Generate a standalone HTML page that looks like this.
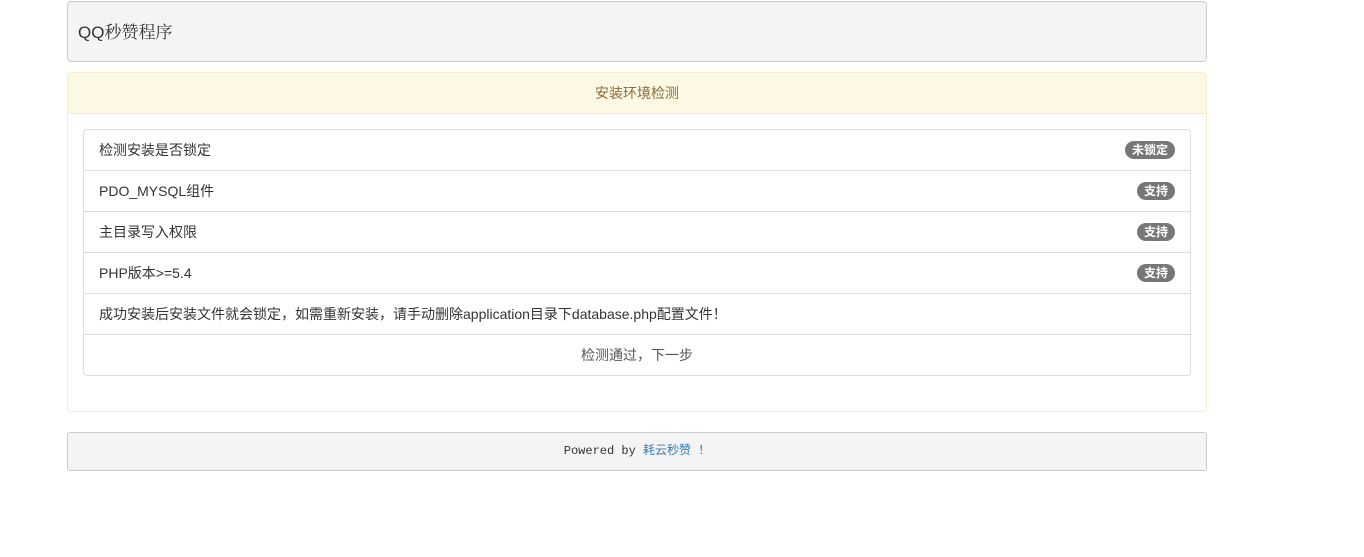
<!DOCTYPE html>
<html><head><meta charset="utf-8"><style>
*{box-sizing:border-box;margin:0;padding:0}
body{width:1364px;height:557px;background:#fff;font-family:"Liberation Sans","Noto Sans CJK SC",sans-serif;font-size:14px;color:#333;position:relative}
.top{position:absolute;left:67px;top:1px;width:1140px;height:61px;background:#f4f4f4;border:1px solid #ccc;border-radius:4px}
.top span{position:absolute;left:10px;top:16px;font-size:17px;color:#333;font-family:"Liberation Sans","Noto Serif CJK SC",serif}
.panel{position:absolute;left:67px;top:72px;width:1140px;height:340px;border:1px solid #faebcc;border-radius:4px;background:#fff}
.ph{height:41px;background:#fcf8e3;border-bottom:1px solid #faebcc;text-align:center;line-height:40px;color:#8a6d3b}
.list{position:absolute;left:15px;top:56px;width:1108px;border:1px solid #ddd;border-radius:4px}
.it{height:41px;border-top:1px solid #ddd;padding:0 15px;line-height:40px;position:relative}
.it:first-child{border-top:none;height:40px}
.b{position:absolute;right:15px;top:11px;background:#777;color:#fff;font-size:12px;font-weight:bold;line-height:18px;padding:0 7px;border-radius:10px}
.c{text-align:center;color:#555}
.foot{position:absolute;left:67px;top:432px;width:1140px;height:39px;background:#f4f4f4;border:1px solid #ccc;border-radius:3px;text-align:center;line-height:37px;font-family:"Liberation Mono","Noto Sans CJK SC",monospace;font-size:12px;color:#333}
.foot a{color:#337ab7;text-decoration:none}
</style></head><body>
<div class="top"><span>QQ秒赞程序</span></div>
<div class="panel"><div class="ph">安装环境检测</div>
<div class="list">
<div class="it">检测安装是否锁定<span class="b">未锁定</span></div>
<div class="it">PDO_MYSQL组件<span class="b">支持</span></div>
<div class="it">主目录写入权限<span class="b">支持</span></div>
<div class="it">PHP版本&gt;=5.4<span class="b">支持</span></div>
<div class="it">成功安装后安装文件就会锁定，如需重新安装，请手动删除application目录下database.php配置文件！</div>
<div class="it c">检测通过，下一步</div>
</div></div>
<div class="foot">Powered by <a>耗云秒赞 ！</a></div>
</body></html>
